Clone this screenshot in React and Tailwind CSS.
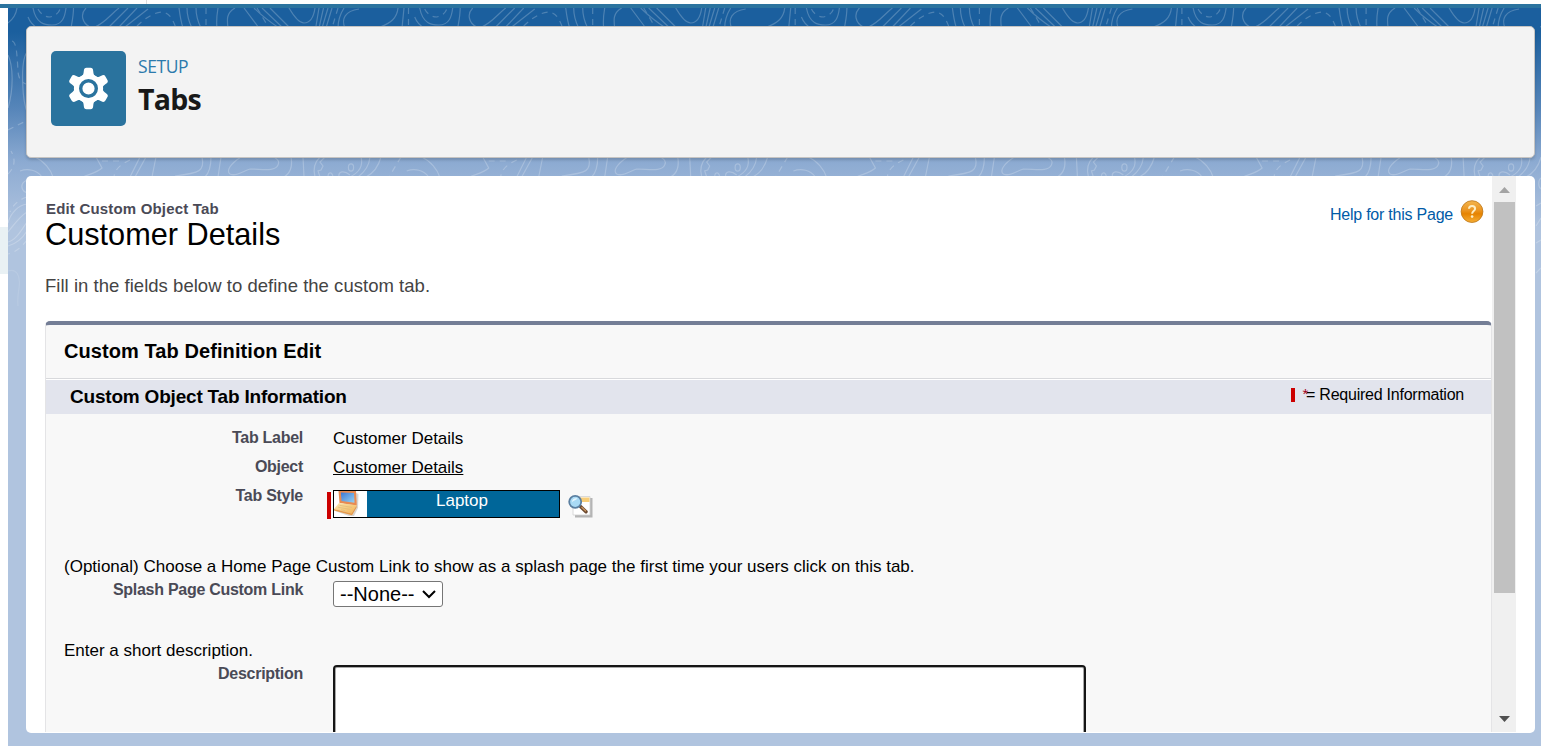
import React from "react";

const solidLines = [
  "M33 8 C36 24 45 25 52 25 C63 25 65 16 66 8",
  "M28 17 C30 22 33 26 38 28",
  "M73.5 8 C73.5 16 72 22 71 28",
  "M86 8 C80 14 82 23 90 27",
  "M119 8 C111 14 106 22 95 27",
  "M128 8 L109 27", "M137 8 L119 27", "M148 9 L125 27",
  "M179 8 C180 16 181 22 183 28", "M187 8 C187 16 189 22 192 28", "M196 8 C196 16 198 22 201 28",
  "M218 8 C217 14 216 20 217 28", "M235 8 C226 13 227 20 228 28",
  "M244 8 L259 28", "M254 8 C262 16 270 22 279 28", "M262 8 L283 28", "M270 8 L290 28",
  "M289 8 C296 20 300 23 304 23 C311 23 314 15 315 8",
  "M319 8 L316 26", "M323.5 8 L319 28", "M328 8 L322 28", "M332 8 L326 28", "M344 8 C339 16 338 22 338 28",
  "M359 9 C345 11 341 19 345 28",
  "M398 8 C397 18 391 23 380 27", "M404 8 L402 28",
  "M35 157 C44 161 51 170 53 177", "M20 171 C28 168 37 170 42 177",
  "M96 157 L102 168 C98 172 90 174 83 177",
  "M140 157 L130 177", "M146 157 L135 177", "M156 157 L152 177",
  "M202 157 C205 171 200 173 175 176", "M211 157 C211 168 208 174 205 177", "M221 157 L218 177",
  "M241 157 C230 164 226 171 230 174 C236 177 243 171 250 169 C262 169 275 172 278 165 C280 161 277 159 274 157",
  "M291 157 C293 168 289 174 284 177", "M303 157 L304 177",
  "M320 157 C314 163 313 170 315 177",
  "M325 157 L320 162 L323 166 L321 170 L318 171 L320 177",
  "M328 177 C328 172 332 171 333 177", "M339 177 C338 171 344 170 350 175",
  "M361 157 C364 168 356 174 350 177", "M370 157 C369 168 362 174 358 177",
  "M381 157 C378 168 372 174 366 177",
];

const dashedLines = [
  "M38 9 C41 15 46 17 50 17 C55 16 59 13 60 9",
  "M137 26 C145 18 155 12 162 12 C170 13 173 20 176 28",
  "M206 8 L206 28", "M257 8 L269 28", "M338 8 L332 28", "M408.5 8 L408.5 28",
  "M102 161 L119 161", "M130 160 C122 164 115 168 114 177", "M401 157 L389 177",
];

const edgeSolidLines = [
  "M17 8 C16 15 12 20 8 23",
  "M8 55 C13 65 14 88 8 108", "M27 52 C20 62 22 102 28 114",
  "M27 180 C20 183 20 191 28 193",
  "M27 204 C18 205 10 214 8 223", "M27 212 C19 217 13 226 8 232", "M27 222 C21 231 15 241 8 242",
  "M27 231 C22 239 16 244 8 246",
];

const edgeDashedLines = [
  "M12 41 C17 42 17 58 18 70 C18 78 21 82 26 84",
  "M8 130 L26 121", "M8 174 C16 166 15 158 11 151",
  "M27 197 C18 200 13 205 10 212", "M27 240 C21 248 14 253 8 254",
];

function TopographicLines() {
  return (
    <svg className="absolute inset-0 h-full w-full" viewBox="8 8 1533 738" preserveAspectRatio="none" fill="none" stroke="#fff" strokeWidth="1.2" opacity="0.22">
      <defs>
        <g id="contours">
          {solidLines.map((d) => <path key={d} d={d} />)}
          <ellipse cx="351" cy="167.5" rx="2.6" ry="3.6" />
          <g strokeDasharray="6 5">{dashedLines.map((d) => <path key={d} d={d} />)}</g>
        </g>
      </defs>
      <use href="#contours" />
      <use href="#contours" x="386.7" />
      <use href="#contours" x="773.4" />
      <use href="#contours" x="1160.1" />
      {edgeSolidLines.map((d) => <path key={d} d={d} />)}
      <g strokeDasharray="6 5">{edgeDashedLines.map((d) => <path key={d} d={d} />)}</g>
      <path opacity="0.5" d="M8 271 C16 268 21 275 19 288 C17 300 18 303 18 306" />
      <path d="M1541 178 C1538 180 1538 187 1541 189 M1536 206 L1541 203 M1536 226 L1541 218 M1536 243 L1541 240 M1536 273 L1541 268" />
    </svg>
  );
}

function GearIcon() {
  return (
    <svg className="h-[75px] w-[75px]" viewBox="0 0 75 75">
      <g fill="#fff" transform="translate(37.5 37.5)">
        <circle r="14.6" />
        {[0, 60, 120, 180, 240, 300].map((a) => (
          <path key={a} transform={`rotate(${a})`} d="M-7.5 -12 C-5.2 -13 -5 -14.5 -4.7 -17.5 Q-4.5 -20.7 -2 -20.7 H2 Q4.5 -20.7 4.7 -17.5 C5 -14.5 5.2 -13 7.5 -12 Z" />
        ))}
        <circle r="7.8" fill="#fff" stroke="#2a739e" strokeWidth="3.4" />
      </g>
    </svg>
  );
}

function HelpIcon() {
  return (
    <svg className="h-[24px] w-[24px]" viewBox="0 0 24 24">
      <defs>
        <linearGradient id="orange" x1="0" y1="0" x2="0" y2="1">
          <stop offset="0" stopColor="#f3b54e" />
          <stop offset="0.45" stopColor="#eb9420" />
          <stop offset="0.6" stopColor="#e68300" />
          <stop offset="1" stopColor="#f6ae35" />
        </linearGradient>
      </defs>
      <circle cx="12" cy="11.6" r="10.9" fill="url(#orange)" stroke="#bd7618" strokeWidth="0.8" />
      <path d="M9 8.8 C9.1 5.2 15.1 5.2 15.1 8.8 C15.1 11.1 12.1 11.1 12.1 13.7" fill="none" stroke="#fdeec4" strokeWidth="2" />
      <circle cx="12.1" cy="16.6" r="1.3" fill="#fdeec4" />
    </svg>
  );
}

function LaptopIcon() {
  return (
    <svg className="h-[26px] w-[33px]" viewBox="0 0 33 26">
      <defs>
        <linearGradient id="screen" x1="0" y1="0" x2="1" y2="1">
          <stop offset="0" stopColor="#3c78d4" />
          <stop offset="1" stopColor="#9ad2f0" />
        </linearGradient>
        <linearGradient id="deck" x1="0" y1="0" x2="1" y2="1">
          <stop offset="0" stopColor="#fbe9b4" />
          <stop offset="1" stopColor="#f3b050" />
        </linearGradient>
      </defs>
      <path d="M22 2 L24.5 3 L24 17 L20 25 L15 25 L1 20 Z" fill="#c9c3bd" opacity="0.7" />
      <path d="M4.5 0 H22 L22.8 14.5 L5.5 12 Z" fill="#e98a50" />
      <path d="M6.9 1.5 L20 2 L20.5 11.8 L7.5 10 Z" fill="url(#screen)" />
      <path d="M5 12 L22.6 14.2 L17.5 22.6 L0 18 Z" fill="url(#deck)" />
      <path d="M0 18 L17.5 22.4 L22.6 14.5 V16.5 L18 24.2 L0 19.6 Z" fill="#e89a48" />
      <path d="M5.5 14.3 L18 16.4 M4 16.2 L16.5 18.5 M7 18.8 L11 19.6" stroke="#e0bd7c" strokeWidth="0.8" />
    </svg>
  );
}

function LookupIcon() {
  return (
    <svg className="h-[25px] w-[26px]" viewBox="0 0 26 25">
      <path d="M7 4 H24.5 V23.5 H7 Z" fill="#b5b5b5" />
      <path d="M5 2.5 H22 V21 H5 Z" fill="#fff" stroke="#d0d0d0" strokeWidth="0.8" />
      <path d="M12 3.5 H21.5 V8 H12 Z" fill="#f8ce78" />
      <path d="M12.5 12.5 L18 17.8" stroke="#6b4930" strokeWidth="3.4" strokeLinecap="round" />
      <path d="M13.5 13 L18 17.3" stroke="#d09a62" strokeWidth="1.2" />
      <circle cx="7.2" cy="7.8" r="6" fill="#a9daf5" stroke="#5b7fa0" strokeWidth="1.8" />
      <path d="M4 8 C4 4.5 7 3.5 9.5 4.5 C8 6 6 6.5 4 8" fill="#e7f7ff" />
    </svg>
  );
}

function FieldLabel({ children }) {
  return <div className="w-[257px] shrink-0 whitespace-nowrap text-right text-[16px] font-bold leading-[20px] tracking-[-0.28px] text-[#4a4a56]">{children}</div>;
}

function PageHeader() {
  return (
    <header className="relative flex h-[132px] shrink-0 items-start rounded-[5px] border border-[#c6c4c2] bg-[#f3f3f3] pl-6 pt-6 shadow-[0_2px_3px_rgba(0,0,0,0.16)]">
      <div className="h-[75px] w-[75px] rounded-[5px] bg-[#2a739e]"><GearIcon /></div>
      <div className="ml-3">
        <div className="mt-[5px] font-['Open_Sans',sans-serif] text-[17.5px] leading-[20px] tracking-[-0.4px] text-[#2b7aac]">SETUP</div>
        <h1 className="mt-[6px] font-['Open_Sans',sans-serif] text-[28.5px] font-bold leading-[34px] tracking-[-0.75px] text-[#181818]">Tabs</h1>
      </div>
    </header>
  );
}

function Scrollbar() {
  return (
    <div className="flex w-[24px] shrink-0 flex-col items-center bg-[#f0f0f0]">
      <svg className="h-[26px] w-[24px] shrink-0" viewBox="0 0 24 26"><path d="M7 17 L12.5 11 L18 17 Z" fill="#a3a3a3" /></svg>
      <div className="ml-[1px] h-[391px] w-[21px] shrink-0 bg-[#c1c1c1]" />
      <div className="grow" />
      <svg className="h-[25px] w-[24px] shrink-0" viewBox="0 0 24 25"><path d="M7 9 L12.5 15 L18 9 Z" fill="#505050" /></svg>
    </div>
  );
}

function TabForm() {
  return (
    <section className="mt-[23px] h-[411px] overflow-hidden rounded-t-[5px] border-x border-t-[4px] border-x-[#e4e4e6] border-t-[#747e96] bg-[#f8f8f8]">
      <h3 className="h-[53px] pl-[18px] pt-[14px] text-[20px] font-bold leading-[24px] tracking-[0.08px]">Custom Tab Definition Edit</h3>
      <div className="flex h-[36px] items-start justify-between border-t border-[#d8d9dc] bg-[#e2e4ed] pl-6 pr-[27px] shadow-[inset_0_1px_0_#ffffff]">
        <h4 className="pt-[6px] text-[19px] font-bold leading-[24px] tracking-[-0.2px]">Custom Object Tab Information</h4>
        <div className="flex items-center pt-[6px] text-[16px] leading-[20px] tracking-[-0.24px]">
          <span className="mr-[7px] h-[14px] w-[4px] bg-[#c00]" />
          <span className="mb-[3px] text-[15px] leading-[16px] text-[#a00020]">*</span>
          <span className="-ml-[2px]">= Required Information</span>
        </div>
      </div>
      <div className="mt-[13px] flex h-[29px] pt-px text-[17px]">
        <FieldLabel>Tab Label</FieldLabel>
        <span className="ml-[30px] pt-[1px] leading-[20px]">Customer Details</span>
      </div>
      <div className="flex h-[29px] pt-px text-[17px]">
        <FieldLabel>Object</FieldLabel>
        <a className="ml-[30px] pt-[1px] leading-[20px] underline">Customer Details</a>
      </div>
      <div className="flex h-[71px] items-start pt-px text-[17px]">
        <FieldLabel>Tab Style</FieldLabel>
        <span className="ml-6 mt-[6px] h-[27px] w-[4px] bg-[#c00]" />
        <div className="ml-[2px] mt-[4px] flex h-[28px] w-[227px] overflow-hidden border border-black bg-white">
          <LaptopIcon />
          <div className="grow bg-[#069] pr-[2px] text-center text-[17px] leading-[19px] text-white">Laptop</div>
        </div>
        <div className="ml-[8px] mt-[8px]"><LookupIcon /></div>
      </div>
      <p className="pl-[18px] text-[17px] leading-[22px] tracking-[0.01px]">(Optional) Choose a Home Page Custom Link to show as a splash page the first time your users click on this tab.</p>
      <div className="flex h-[62px] items-start pt-[2px]">
        <FieldLabel>Splash Page Custom Link</FieldLabel>
        <div className="ml-[30px] mt-[1px] flex h-[26px] w-[110px] items-center rounded-[3px] border border-[#767676] bg-white pl-[6px] text-[20px] leading-[24px]">
          <span>--None--</span>
          <svg className="ml-[8px] h-[14px] w-[14px]" viewBox="0 0 14 14" fill="none" stroke="#000" strokeWidth="2"><path d="M1 4 L7 10 L13 4" /></svg>
        </div>
      </div>
      <p className="pl-[18px] text-[17px] leading-[22px]">Enter a short description.</p>
      <div className="flex items-start pt-[2px]">
        <FieldLabel>Description</FieldLabel>
        <textarea className="ml-[30px] mt-px h-[100px] w-[753px] resize-none rounded-[4px] border-2 border-[#151515] bg-white shadow-[inset_0_0_0_1px_#a8a8a8] outline-none" />
      </div>
    </section>
  );
}

export default function App() {
  return (
    <div className="flex h-[746px] w-[1541px] flex-col overflow-hidden bg-white font-['Liberation_Sans',sans-serif] text-black">
      <div className="flex h-[4px] shrink-0 bg-[#fdfefd]"><div className="w-[147px] border-r border-[#dddddd]" /></div>
      <div className="h-[4px] shrink-0 bg-[#2a739e]" />
      <div className="flex h-[738px]">
        <div className="w-[8px] shrink-0 pt-[219px]"><div className="h-[47px] bg-[#e9f1f4]" /></div>
        <main className="relative flex grow flex-col gap-[18px] bg-[linear-gradient(to_bottom,#1b5f9e_0px,#1b5f9e_24px,#5685b9_100px,#8dabd2_155px,#b0c4df_220px)] pl-[18px] pr-[6px] pt-[18px]">
          <TopographicLines />
          <PageHeader />
          <div className="relative flex h-[557px] shrink-0 overflow-hidden rounded-[5px] bg-white pb-px pr-[19px]">
            <div className="grow pl-[19px]">
              <div className="flex h-[75px] justify-between">
                <div className="pt-[24px]">
                  <div className="ml-px text-[15px] font-bold leading-[18px] tracking-[0.18px] text-[#4a4a56]">Edit Custom Object Tab</div>
                  <h2 className="text-[30.7px] leading-[34px]">Customer Details</h2>
                </div>
                <div className="flex items-start pr-[8px] pt-[24px]">
                  <a className="mt-[5px] text-[16px] leading-[20px] tracking-[-0.23px] text-[#015ba7]">Help for this Page</a>
                  <span className="ml-[7px]"><HelpIcon /></span>
                </div>
              </div>
              <p className="mt-[23px] text-[18.5px] leading-[24px] tracking-[0.03px] text-[#444]">Fill in the fields below to define the custom tab.</p>
              <TabForm />
            </div>
            <Scrollbar />
          </div>
        </main>
      </div>
    </div>
  );
}
